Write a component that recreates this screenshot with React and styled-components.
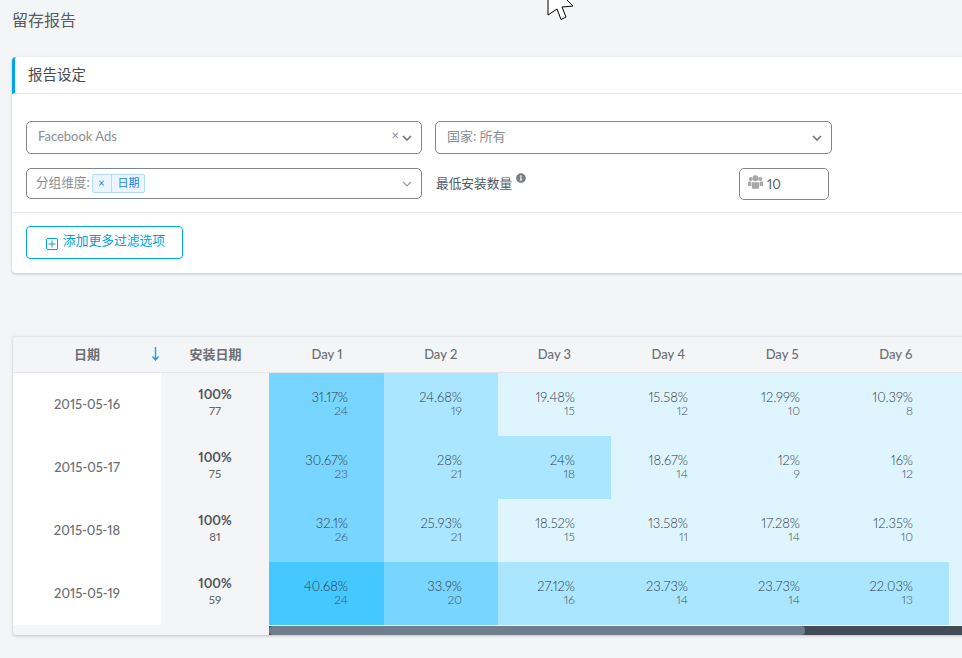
import React from "react";
import styled, { createGlobalStyle } from "styled-components";
import { FaInfoCircle } from "react-icons/fa";

const FONT = `Lato, "Noto Sans CJK SC", sans-serif`;

const rows = [
  { date: "2015-05-16", total: 77, days: [["31.17%", 24], ["24.68%", 19], ["19.48%", 15], ["15.58%", 12], ["12.99%", 10], ["10.39%", 8]] },
  { date: "2015-05-17", total: 75, days: [["30.67%", 23], ["28%", 21], ["24%", 18], ["18.67%", 14], ["12%", 9], ["16%", 12]] },
  { date: "2015-05-18", total: 81, days: [["32.1%", 26], ["25.93%", 21], ["18.52%", 15], ["13.58%", 11], ["17.28%", 14], ["12.35%", 10]] },
  { date: "2015-05-19", total: 59, days: [["40.68%", 24], ["33.9%", 20], ["27.12%", 16], ["23.73%", 14], ["23.73%", 14], ["22.03%", 13]] },
];

const heat = (pct) => {
  const v = parseFloat(pct);
  if (v >= 40) return "#45c7ff";
  if (v >= 30) return "#78d5ff";
  if (v >= 20) return "#aae6ff";
  return "#def5ff";
};

const GlobalStyle = createGlobalStyle`
  html, body {
    margin: 0;
    height: 100%;
    overflow: hidden;
    background: #f4f5f7;
  }
`;

const Page = styled.div`
  position: relative;
  width: 962px;
  height: 658px;
  overflow: hidden;
  padding-left: 12px;
  box-sizing: border-box;
  font-family: ${FONT};
  font-variant-numeric: proportional-nums;
  color: #4a5560;
`;

const Title = styled.h1`
  margin: 0 0 17px;
  height: 40px;
  font-size: 16px;
  font-weight: 400;
  line-height: 40px;
  color: #565c62;
`;

const Card = styled.section`
  width: 1000px;
  height: 216px;
  background: #fff;
  border-radius: 4px;
  box-shadow: 0 1px 3px rgba(60, 66, 80, 0.28);
`;

const CardHeader = styled.div`
  height: 36px;
  box-sizing: content-box;
  border-left: 3px solid #00a7e8;
  border-bottom: 1px solid #e8e9eb;
  border-top-left-radius: 4px;
  padding-left: 13px;
  font-size: 14.5px;
  line-height: 36px;
  color: #454c53;
`;

const FilterGrid = styled.div`
  display: grid;
  grid-template-columns: 396px 397px;
  grid-template-rows: 33px 32px;
  column-gap: 13px;
  row-gap: 14px;
  padding: 27px 0 12px 14px;
  border-bottom: 1px solid #e8e9eb;
`;

const Select = styled.div`
  display: flex;
  align-items: center;
  box-sizing: border-box;
  height: ${(p) => (p.$short ? "31px" : "33px")};
  padding: 0 9px 0 ${(p) => p.$pad}px;
  border: 1px solid #82858c;
  border-radius: 5px;
  background: #fff;
  font-size: 13px;
  color: #8a8e93;
`;

const SelectValue = styled.span`
  flex: 1;
  display: flex;
  align-items: center;
  gap: 1px;
  padding-bottom: ${(p) => p.$lift || 3}px;
`;

const GroupLabel = styled.span`
  font-size: 12.6px;
  padding-bottom: 1px;
`;

const Clear = styled.span`
  margin-right: 3px;
  margin-top: -4px;
  font-size: 13px;
  line-height: 1;
  color: #83878c;
`;

const Tag = styled.span`
  display: inline-flex;
  height: 19px;
  box-sizing: border-box;
  margin: 2px 0 0 1px;
  border: 1px solid #b3d9ff;
  border-radius: 2px;
  background: #ebf5ff;
  font-size: 11px;
  line-height: 16px;
  color: #1f7fe8;
`;

const TagRemove = styled.span`
  width: 18px;
  text-align: center;
  border-right: 1px solid #b3d9ff;
`;

const TagLabel = styled.span`
  padding: 0 4px 0 6px;
`;

const MinInstalls = styled.div`
  display: flex;
  align-items: flex-start;
  justify-content: space-between;
  padding-right: 3px;
`;

const FieldLabel = styled.span`
  display: flex;
  align-items: flex-start;
  gap: 4px;
  margin-top: 6px;
  padding-left: 1px;
  font-size: 12.7px;
  line-height: 18px;
  color: #4f5a64;
`;

const InfoIcon = styled(FaInfoCircle)`
  width: 10px;
  height: 10px;
  margin-top: -1px;
  color: #7b7f84;
`;

const CountInput = styled.div`
  display: flex;
  align-items: center;
  gap: 4px;
  box-sizing: border-box;
  width: 90px;
  height: 32px;
  padding-left: 8px;
  border: 1px solid #82858c;
  border-radius: 5px;
  font-size: 13px;
  color: #55606a;
`;

const UsersGlyph = styled.svg`
  width: 15px;
  height: 14px;
  margin-top: -4px;
  fill: #a8a8a8;
`;

const CardFooter = styled.div`
  padding: 13px 14px;
`;

const AddButton = styled.button`
  display: flex;
  align-items: center;
  gap: 5px;
  box-sizing: border-box;
  width: 157px;
  height: 33px;
  padding: 0 0 7px 19px;
  border: 1px solid #00a7e8;
  border-radius: 4px;
  background: #fff;
  font-family: ${FONT};
  font-size: 12.75px;
  color: #00a0e0;
`;

const PlusIcon = styled.svg`
  width: 12px;
  height: 12px;
  margin-top: 9px;
`;

const TableCard = styled.section`
  width: 1000px;
  margin-top: 63px;
  margin-left: 1px;
  background: #f4f5f7;
  border-top: 1px solid #e4e5e8;
  border-radius: 3px;
  box-shadow: 0 1px 3px rgba(60, 66, 80, 0.3);
`;

const HeaderRow = styled.div`
  display: grid;
  grid-template-columns: 148px 109px repeat(7, 113.8px);
  height: 35px;
  border-bottom: 1px solid #e4e5e8;
`;

const HeaderCell = styled.div`
  position: relative;
  text-align: center;
  font-size: 13px;
  font-weight: ${(p) => (p.$bold ? 700 : 500)};
  line-height: 34px;
  color: #6b7075;
`;

const SortArrow = styled.svg`
  position: absolute;
  top: 10px;
  right: 1px;
  width: 9px;
  height: 14px;
`;

const BodyRow = styled.div`
  display: grid;
  grid-template-columns: 148px 108px 115px 114px 113px 113px 112px 113px 113px;
  height: 63px;
`;

const DateCell = styled.div`
  display: flex;
  align-items: center;
  justify-content: center;
  padding-bottom: 2px;
  background: #fff;
  font-size: 13px;
  font-weight: 500;
  color: #6a6e72;
`;

const TotalCell = styled.div`
  display: flex;
  flex-direction: column;
  align-items: center;
  justify-content: center;
  padding-bottom: 6px;
  background: #f4f5f7;
`;

const TotalPct = styled.span`
  font-size: 13px;
  font-weight: 700;
  line-height: 17px;
  color: #50565c;
`;

const TotalCount = styled.span`
  font-size: 11.5px;
  font-weight: 500;
  line-height: 15px;
  color: #666a6e;
`;

const HeatCell = styled.div`
  display: flex;
  flex-direction: column;
  justify-content: center;
  align-items: flex-end;
  padding: 0 36px 2px 0;
  background: ${(p) => p.$bg};
`;

const HeatPct = styled.span`
  font-size: 13px;
  font-weight: 300;
  line-height: 14px;
  color: #2f3945;
`;

const HeatCount = styled.span`
  font-size: 12px;
  font-weight: 300;
  line-height: 14px;
  color: #434e59;
`;

const ScrollTrack = styled.div`
  height: 9px;
  margin-left: 256px;
  border-top: 1px solid #fff;
  background: #434b57;
`;

const ScrollThumb = styled.div`
  width: 536px;
  height: 100%;
  border-radius: 4px;
  background: #717e8e;
`;

const Cursor = styled.svg`
  position: absolute;
  top: -20px;
  left: 547px;
  width: 27px;
  height: 41px;
`;

const Chevron = ({ light }) => (
  <svg width="10" height="6" viewBox="0 0 10 6" fill="none">
    <path d="M1 1l4 4 4-4" stroke={light ? "#9a9da1" : "#74787d"} strokeWidth={light ? 1.2 : 1.7} />
  </svg>
);

export default function App() {
  return (
    <Page>
      <GlobalStyle />
      <Title>留存报告</Title>

      <Card>
        <CardHeader>报告设定</CardHeader>
        <FilterGrid>
          <Select $pad={11}>
            <SelectValue>Facebook Ads</SelectValue>
            <Clear>×</Clear>
            <Chevron />
          </Select>
          <Select $pad={11}>
            <SelectValue $lift={5}>国家: 所有</SelectValue>
            <Chevron />
          </Select>
          <Select $pad={9} $short>
            <SelectValue>
              <GroupLabel>分组维度:</GroupLabel>
              <Tag>
                <TagRemove>×</TagRemove>
                <TagLabel>日期</TagLabel>
              </Tag>
            </SelectValue>
            <Chevron light />
          </Select>
          <MinInstalls>
            <FieldLabel>
              最低安装数量
              <InfoIcon />
            </FieldLabel>
            <CountInput>
              <UsersGlyph viewBox="0 0 15 14">
                <circle cx="2.8" cy="4" r="2" />
                <circle cx="12.2" cy="4" r="2" />
                <circle cx="7.5" cy="3.2" r="3" />
                <path d="M0 6.8c1.2-.5 2.5-.5 3.2 0v4.2H0zM11.8 6.8c1.2-.5 2.3-.5 3.2 0V11h-3.2z" />
                <path d="M3.8 7.2h7.4v5.4c0 .8-.6 1.2-1.2 1.2H5c-.6 0-1.2-.4-1.2-1.2z" />
              </UsersGlyph>
              10
            </CountInput>
          </MinInstalls>
        </FilterGrid>
        <CardFooter>
          <AddButton>
            <PlusIcon viewBox="0 0 12 12" fill="none">
              <rect x="0.5" y="0.5" width="11" height="11" rx="1.5" stroke="#00a0e0" />
              <path d="M6 2.5v7M2.5 6h7" stroke="#00a0e0" />
            </PlusIcon>
            添加更多过滤选项
          </AddButton>
        </CardFooter>
      </Card>

      <TableCard>
        <HeaderRow>
          <HeaderCell $bold>
            日期
            <SortArrow viewBox="0 0 9 14" fill="none">
              <path d="M4.5 0v13M1.5 9.5l3 3.5 3-3.5" stroke="#1f9fe6" strokeWidth="1.4" />
            </SortArrow>
          </HeaderCell>
          <HeaderCell $bold>安装日期</HeaderCell>
          {[1, 2, 3, 4, 5, 6].map((d) => (
            <HeaderCell key={d}>Day {d}</HeaderCell>
          ))}
        </HeaderRow>

        {rows.map((r) => (
          <BodyRow key={r.date}>
            <DateCell>{r.date}</DateCell>
            <TotalCell>
              <TotalPct>100%</TotalPct>
              <TotalCount>{r.total}</TotalCount>
            </TotalCell>
            {r.days.map(([pct, count], i) => (
              <HeatCell key={i} $bg={heat(pct)}>
                <HeatPct>{pct}</HeatPct>
                <HeatCount>{count}</HeatCount>
              </HeatCell>
            ))}
            <HeatCell $bg="#def5ff" />
          </BodyRow>
        ))}

        <ScrollTrack>
          <ScrollThumb />
        </ScrollTrack>
      </TableCard>

      <Cursor viewBox="0 0 27 41">
        <path d="M1 1v34l9-6 4 10.5 5-2.5-4-10 11-1z" fill="#fff" stroke="#000" strokeWidth="1" strokeLinejoin="round" />
      </Cursor>
    </Page>
  );
}
